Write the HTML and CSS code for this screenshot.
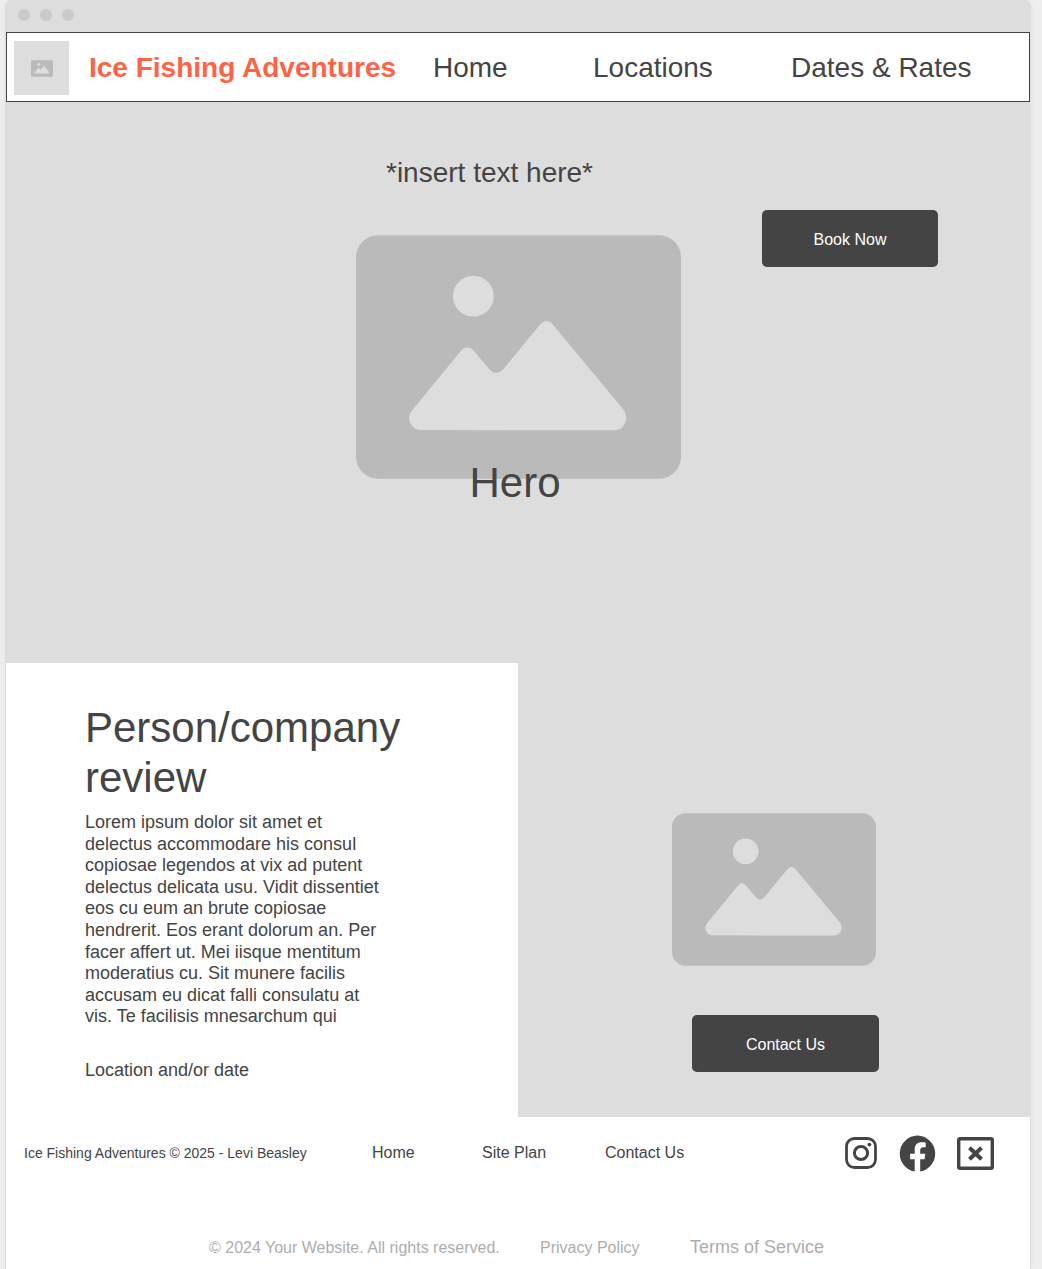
FILE: index.html
```html
<!DOCTYPE html>
<html lang="en">
<head>
<meta charset="utf-8">
<meta name="viewport" content="width=device-width, initial-scale=1">
<title>Ice Fishing Adventures</title>
<link rel="stylesheet" href="styles.css">
</head>
<body>
<svg class="defs" aria-hidden="true">
  <symbol id="picture" viewBox="0 0 326 244">
    <rect width="326" height="244" rx="22" fill="#bababa"/>
    <circle cx="117.700" cy="61" r="20.500" fill="#ddd"/>
    <path fill="#ddd" d="M56 176L105.500 115.500Q111.500 109 117.500 115L134 134.500Q140.500 141.500 147.500 134.500L185 89Q191 83 197 89L268 174.500C275 184 269 195.600 259 195.600L66 195.300C55 195.300 50 184 56 176Z"/>
  </symbol>
</svg>
<div class="window">
  <div class="titlebar"><span class="dot"></span><span class="dot"></span><span class="dot"></span></div>
  <header class="header">
    <div class="logo"><svg class="logo-picture" role="img" aria-label="Logo"><use href="#picture"/></svg></div>
    <a class="brand" href="#">Ice Fishing Adventures</a>
    <nav class="nav" aria-label="Main">
      <a href="#">Home</a>
      <a href="#">Locations</a>
      <a href="#">Dates &amp; Rates</a>
    </nav>
  </header>
  <main>
    <section class="hero">
      <div class="hero-main">
        <p class="tagline">*insert text here*</p>
        <svg class="hero-picture" role="img" aria-label="Hero picture"><use href="#picture"/></svg>
        <h1 class="hero-title">Hero</h1>
      </div>
      <button class="button book" type="button">Book Now</button>
    </section>
    <section class="split">
      <article class="review">
        <h2 class="review-title">Person/company review</h2>
        <p class="review-text">Lorem ipsum dolor sit amet et delectus accommodare his consul copiosae legendos at vix ad putent delectus delicata usu. Vidit dissentiet eos cu eum an brute copiosae hendrerit. Eos erant dolorum an. Per facer affert ut. Mei iisque mentitum moderatius cu. Sit munere facilis accusam eu dicat falli consulatu at vis. Te facilisis mnesarchum qui</p>
        <p class="review-place">Location and/or date</p>
      </article>
      <div class="contact">
        <svg class="contact-picture" role="img" aria-label="Contact picture"><use href="#picture"/></svg>
        <button class="button contact-button" type="button">Contact Us</button>
      </div>
    </section>
  </main>
  <footer>
    <div class="footer-row">
      <p class="credit">Ice Fishing Adventures © 2025 - Levi Beasley</p>
      <nav class="footer-nav" aria-label="Footer">
        <a href="#">Home</a>
        <a href="#">Site Plan</a>
        <a href="#">Contact Us</a>
      </nav>
      <div class="social">
        <a href="#" aria-label="Instagram"><svg width="33" height="32" viewBox="0 0 33 32" fill="none" stroke="#444">
          <rect x="1.500" y="1.500" width="29" height="29" rx="8" stroke-width="2.800"/>
          <circle cx="16" cy="16" r="6.600" stroke-width="3"/>
          <circle cx="24.400" cy="7.600" r="1.900" fill="#444" stroke="none"/>
        </svg></a>
        <a href="#" aria-label="Facebook"><svg width="37" height="37" viewBox="0 0 37 37">
          <path fill="#444" d="M18.500 0.400A18.200 18.200 0 0 0 15.700 36.500V24.200H11.100V18.700H15.700V14.500C15.700 9.800 18.500 7.300 22.700 7.300C24.600 7.300 26.700 7.700 26.700 7.700V12.200H24.400C22 12.200 21.200 13.700 21.200 15.200V18.700H26.300L25.500 24.200H21.200V36.500A18.200 18.200 0 0 0 18.500 0.400Z"/>
        </svg></a>
        <a href="#" aria-label="Other network"><svg width="37" height="33" viewBox="0 0 37 33" fill="none" stroke="#444">
          <rect x="1.700" y="1.700" width="33.600" height="29.600" rx="1.500" stroke-width="3.400"/>
          <path d="M12.500 10.700L24.500 22.300M24.500 10.700L12.500 22.300" stroke-width="4"/>
        </svg></a>
      </div>
    </div>
    <div class="legal">
      <span>© 2024 Your Website. All rights reserved.</span>
      <a href="#">Privacy Policy</a>
      <a class="terms" href="#">Terms of Service</a>
    </div>
  </footer>
</div>
</body>
</html>
```
FILE: styles.css
```css
* {
  box-sizing: border-box;
}

body {
  margin: 0;
  padding: 0 11px 0 5px;
  background: #eee;
  color: #444;
  font: 16px/1.2 "Liberation Sans", Arial, sans-serif;
}

h1, h2, p {
  margin: 0;
  font-weight: normal;
}

a {
  color: inherit;
  text-decoration: none;
}

svg {
  display: block;
}

.defs {
  position: absolute;
  width: 0;
  height: 0;
}

.window {
  display: flex;
  flex-direction: column;
  min-height: 100vh;
  padding: 0 1px;
  border-radius: 6px 6px 0 0;
  background: #ddd;
  box-shadow: 0 0 4px #e4e4e4;
}

.titlebar {
  display: flex;
  gap: 10px;
  height: 32px;
  padding: 9px 12px;
}

.dot {
  width: 12px;
  height: 12px;
  border-radius: 50%;
  background: #cacaca;
}

.header {
  display: flex;
  align-items: center;
  height: 70px;
  padding: 2px 7px 0;
  border: 1px solid #444;
  background: #fff;
  font-size: 28px;
  white-space: nowrap;
}

.logo {
  display: flex;
  align-items: center;
  justify-content: center;
  width: 55px;
  height: 54px;
  background: #ddd;
}

.logo-picture {
  width: 22px;
  height: 17px;
}

.brand {
  width: 344px;
  padding-left: 20px;
  color: #ff6347;
  font-weight: bold;
}

.nav {
  display: grid;
  grid-template-columns: 160px 198px auto;
  margin-left: 20px;
}

.hero {
  display: grid;
  grid-template-columns: 1fr 324px 1fr;
  align-items: start;
  padding: 54px 0 155px;
  background: #ddd;
}

.hero-main {
  grid-column: 2;
}

.tagline {
  margin-left: 30px;
  font-size: 28px;
  line-height: 34px;
}

.hero-picture {
  width: 325px;
  height: 244px;
  margin-top: 45px;
}

.hero-title {
  margin: -21px 6px 0 0;
  font-size: 42px;
  line-height: 50px;
  text-align: center;
}

.button {
  height: 57px;
  padding: 2px 0 0;
  border: 0;
  border-radius: 5px;
  background: #444;
  color: #fff;
  font: inherit;
}

.book {
  width: 176px;
  margin: 54px 0 0 82px;
}

.split {
  display: grid;
  grid-template-columns: 1fr 1fr;
}

.review {
  padding: 40px 79px 35px;
  background: #fff;
  font-size: 18px;
}

.review-title {
  font-size: 42px;
  line-height: 50px;
}

.review-text {
  max-width: 302px;
  margin: 9px 0 32px;
}

.contact {
  padding: 150px 0 45px 154px;
  background: #ddd;
}

.contact-picture {
  width: 204px;
  height: 153px;
}

.contact-button {
  width: 187px;
  margin: 49px 0 0 20px;
}

footer {
  flex: 1;
  background: #fff;
}

.footer-row {
  display: flex;
  align-items: center;
  height: 72px;
  padding: 0 36px 0 18px;
}

.credit {
  width: 348px;
  font-size: 14px;
}

.footer-nav {
  display: grid;
  grid-template-columns: 110px 123px auto;
}

.social {
  display: flex;
  align-items: center;
  gap: 21px;
  margin-left: auto;
}

.legal {
  display: grid;
  grid-template-columns: 331px 150px 137px;
  align-items: center;
  justify-content: center;
  height: 22px;
  margin-top: 48px;
  color: #adadad;
}

.legal .terms {
  font-size: 18px;
}
```
